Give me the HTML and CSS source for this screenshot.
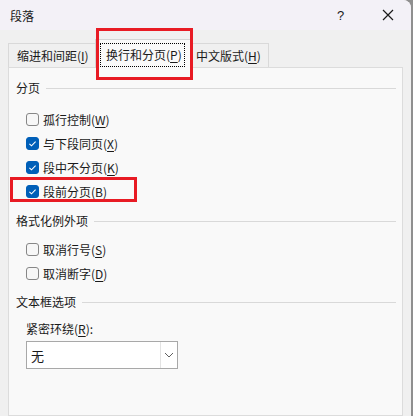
FILE: index.html
```html
<!DOCTYPE html>
<html lang="zh-CN">
<head>
<meta charset="utf-8">
<link rel="stylesheet" href="styles.css">
</head>
<body>
<div class="window">
  <div class="titlebar">
    <span class="title">段落</span>
    <span class="help">?</span>
    <span class="close"><svg width="12" height="12" viewBox="0 0 12 12"><path d="M1 1L11 11M11 1L1 11" stroke="#1a1a1a" stroke-width="1.2" fill="none"/></svg></span>
  </div>
  <div class="tabs">
    <div class="tab t1">缩进和间距(<u>I</u>)</div>
    <div class="tab t2 active"><span class="focus">换行和分页(<u>P</u>)</span></div>
    <div class="tab t3">中文版式(<u>H</u>)</div>
  </div>
  <div class="panel">
    <div class="group g1">
      <div class="ghead"><span>分页</span><i></i></div>
      <div class="rows r1">
        <label class="row"><span class="cb"></span>孤行控制(<u>W</u>)</label>
        <label class="row"><span class="cb on"><svg width="13" height="13" viewBox="0 0 13 13"><path d="M3.4 6.8L5.5 8.8L9.6 4.6" stroke="#fff" stroke-width="1.1" fill="none"/></svg></span>与下段同页(<u>X</u>)</label>
        <label class="row"><span class="cb on"><svg width="13" height="13" viewBox="0 0 13 13"><path d="M3.4 6.8L5.5 8.8L9.6 4.6" stroke="#fff" stroke-width="1.1" fill="none"/></svg></span>段中不分页(<u>K</u>)</label>
        <label class="row"><span class="cb on"><svg width="13" height="13" viewBox="0 0 13 13"><path d="M3.4 6.8L5.5 8.8L9.6 4.6" stroke="#fff" stroke-width="1.1" fill="none"/></svg></span>段前分页(<u>B</u>)</label>
      </div>
    </div>
    <div class="group g2">
      <div class="ghead"><span>格式化例外项</span><i></i></div>
      <div class="rows r2">
        <label class="row"><span class="cb"></span>取消行号(<u>S</u>)</label>
        <label class="row"><span class="cb"></span>取消断字(<u>D</u>)</label>
      </div>
    </div>
    <div class="group g3">
      <div class="ghead"><span>文本框选项</span><i></i></div>
      <div class="field">
        <div class="flabel">紧密环绕(<u>R</u>):</div>
        <div class="select"><span class="val">无</span><span class="btn"><svg width="10" height="6" viewBox="0 0 10 6"><path d="M1 1L5 5L9 1" stroke="#606060" stroke-width="1" fill="none"/></svg></span></div>
      </div>
    </div>
  </div>
  <div class="mark m1"></div>
  <div class="mark m2"></div>
</div>
</body>
</html>
```
FILE: styles.css
```css
html, body {
  margin: 0;
  padding: 0;
  background: #8f8f8f;
}
body {
  width: 413px;
  height: 416px;
  overflow: hidden;
  font-family: "Noto Sans CJK SC", "Noto Sans", sans-serif;
  font-size: 12px;
  color: #1a1a1a;
}
.window {
  position: relative;
  width: 411px;
  height: 416px;
  background: #f0f0f0;
  border-top-right-radius: 8px;
  overflow: hidden;
}
.titlebar {
  height: 30px;
  background: #f3f1f7;
  display: flex;
  align-items: center;
  padding-left: 10px;
}
.title {
  flex: 1;
  font-size: 12px;
}
.help {
  width: 10px;
  font-size: 13px;
  margin-right: 35px;
  font-family: "Liberation Sans", sans-serif;
}
.close {
  display: flex;
  width: 12px;
  margin-right: 17px;
}
.tabs {
  display: flex;
  align-items: flex-end;
  height: 37px;
  padding-left: 8px;
  position: relative;
  z-index: 1;
}
.tab {
  height: 24px;
  line-height: 24px;
  box-sizing: border-box;
  border: 1px solid #d9d9d9;
  border-bottom: none;
  background: #f0f0f0;
  white-space: nowrap;
}
.t1 {
  width: 88px;
  padding-left: 8px;
}
.t2 {
  width: 97px;
  height: 29px;
  line-height: 24px;
  background: #f9f9f9;
  margin-left: -1px;
  margin-right: -1px;
  padding: 3px 0 0 4px;
  position: relative;
  top: 1px;
  border-color: #d4d4d4;
}
.focus {
  display: block;
  width: 85px;
  height: 24px;
  box-sizing: border-box;
  border: 1px dotted #000;
  padding-left: 5px;
  line-height: 22px;
}
.t3 {
  width: 78px;
  padding-left: 5px;
  border-left: none;
}
.panel {
  margin-left: 8px;
  width: 395px;
  height: 349px;
  box-sizing: border-box;
  border: 1px solid #dcdcdc;
  background: #f9f9f9;
  padding: 10px 0 0 7px;
}
.ghead {
  display: flex;
  align-items: center;
  height: 20px;
  line-height: 20px;
}
.ghead i {
  flex: 1;
  height: 1px;
  background: #d9d9d9;
  margin: 1px 6px 0 6px;
}
.rows {
  padding-left: 10px;
}
.r1 { margin-top: 9px; }
.r2 { margin-top: 6px; }
.g2 { margin-top: 8px; }
.g3 { margin-top: 7px; }
.row {
  display: flex;
  align-items: center;
  height: 24px;
}
.cb {
  width: 13px;
  height: 13px;
  box-sizing: border-box;
  border: 1px solid #878787;
  border-radius: 3px;
  background: #f7f7f7;
  margin-right: 4px;
  display: flex;
}
.cb.on {
  background: #005fb8;
  border-color: #005fb8;
}
.cb svg { margin: -1px; }
u { text-decoration: underline; text-underline-offset: 2px; }
.field {
  padding-left: 10px;
  margin-top: 7px;
}
.flabel {
  height: 20px;
  line-height: 20px;
}
.select {
  margin-top: 2px;
  width: 152px;
  height: 28px;
  box-sizing: border-box;
  border: 1px solid #a8a8a8;
  background: #fff;
  display: flex;
  align-items: center;
}
.val {
  flex: 1;
  padding-left: 4px;
  font-size: 13px;
}
.btn {
  width: 16px;
  height: 26px;
  border-left: 1px solid #e3e3e3;
  display: flex;
  align-items: center;
  justify-content: center;
}
.mark {
  position: absolute;
  border: 3px solid #e81b24;
  box-sizing: border-box;
  z-index: 5;
}
.m1 {
  left: 96px;
  top: 28px;
  width: 97px;
  height: 52px;
}
.m2 {
  left: 10px;
  top: 177px;
  width: 127px;
  height: 25px;
}
```
